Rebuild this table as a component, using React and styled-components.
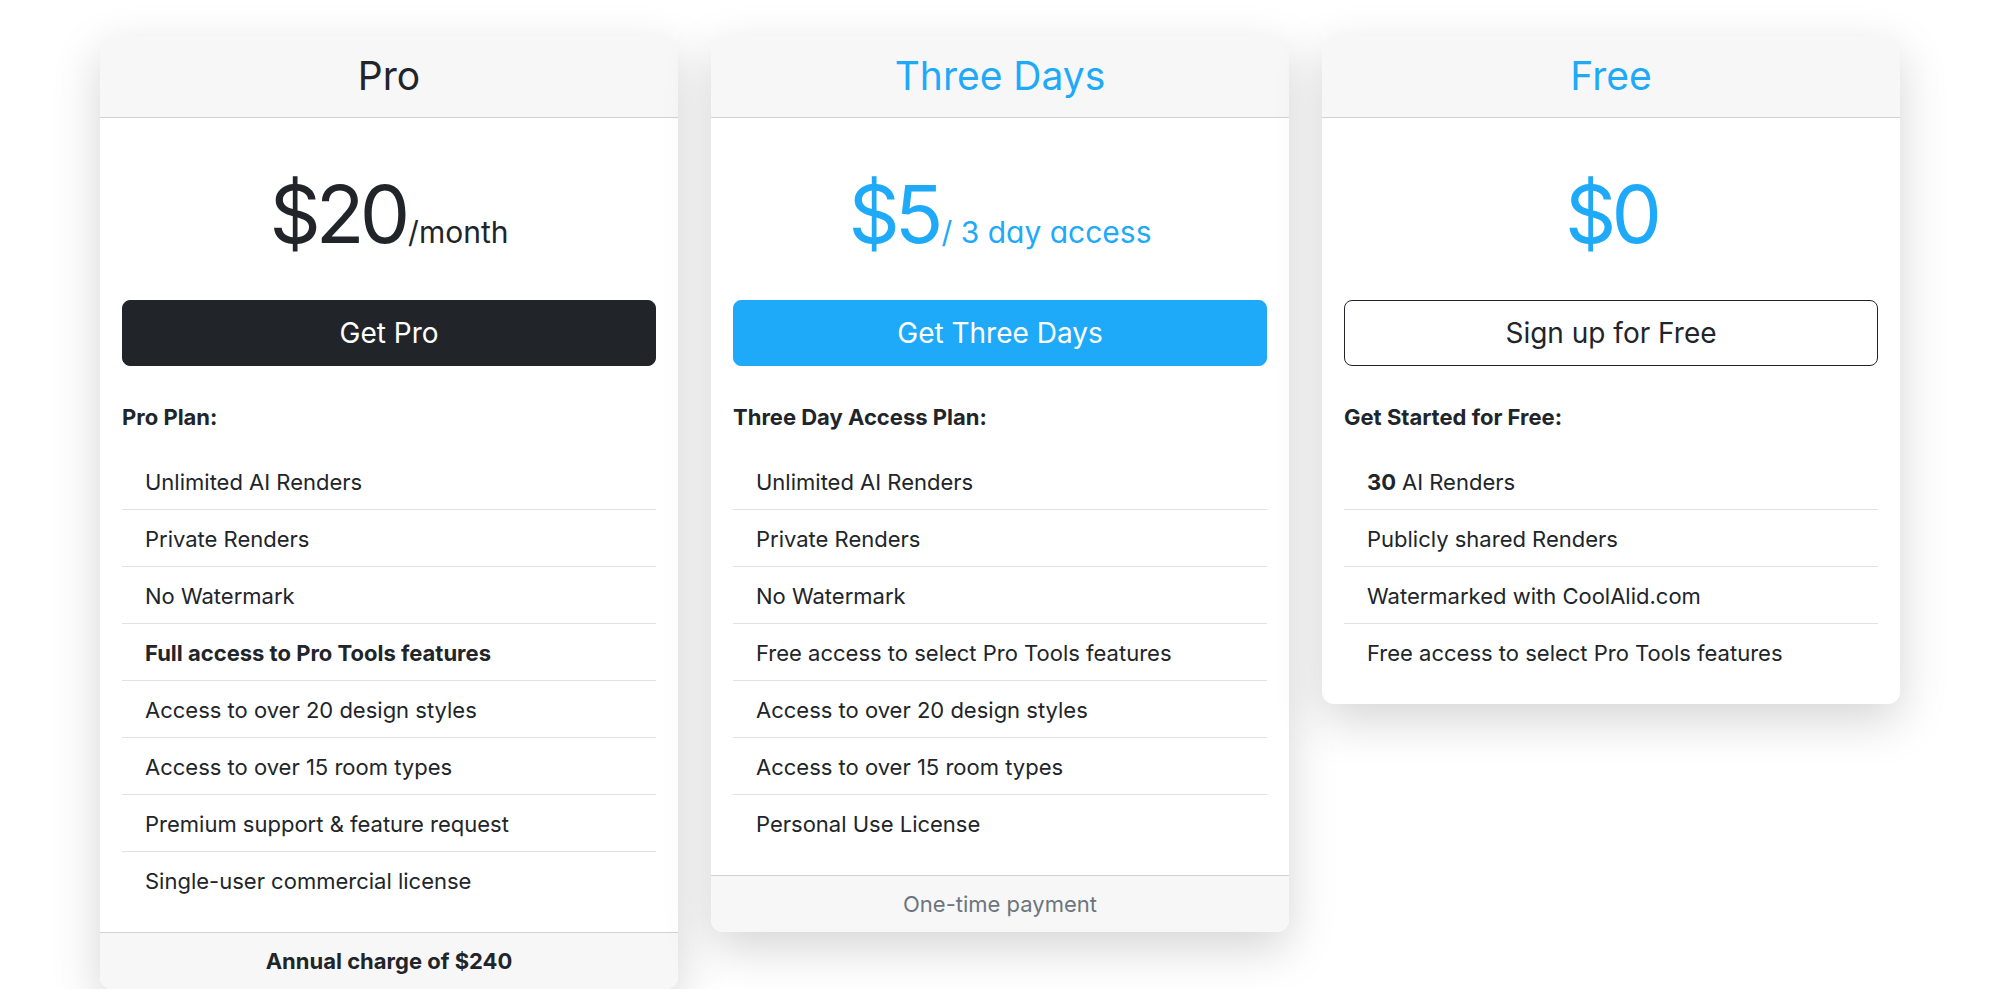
import React from "react";
import styled, { createGlobalStyle, css } from "styled-components";

const BLUE = "#1eaaf9";
const DARK = "#212529";

const GlobalStyle = createGlobalStyle`
  html, body { margin: 0; padding: 0; background: #ffffff; }
  body {
    font-family: Inter, "Noto Sans", "Liberation Sans", sans-serif;
    color: ${DARK};
    -webkit-font-smoothing: antialiased;
  }
  * { box-sizing: border-box; }
`;

const Page = styled.main`
  width: 1800px;
  margin: 0 auto;
  padding-top: 36px;
  display: grid;
  grid-template-columns: repeat(3, 1fr);
  column-gap: 33px;
  align-items: start;
`;

const Card = styled.section`
  background: #ffffff;
  border-radius: 12px;
  box-shadow: 0 16px 48px rgba(0, 0, 0, 0.17);
  overflow: hidden;
  display: flex;
  flex-direction: column;
`;

const CardHeader = styled.header`
  height: 81px;
  background: #f7f7f7;
  border-bottom: 1px solid #d2d2d2;
  display: flex;
  align-items: center;
  justify-content: center;
  box-sizing: content-box;
`;

const Title = styled.h3`
  margin: 0;
  font-size: 39px;
  font-weight: 400;
  line-height: 1.2;
  color: ${(p) => (p.$accent ? BLUE : DARK)};
`;

const CardBody = styled.div`
  padding: 22px 22px 24px;
`;

const PriceRow = styled.div`
  margin: 34px 0 46px;
  text-align: center;
  line-height: 1;
  font-size: 80px;
  font-family: Inter, "Noto Sans", sans-serif;
  font-feature-settings: "cv11" 1;
  color: ${(p) => (p.$accent ? BLUE : DARK)};
  white-space: nowrap;
`;

const Amount = styled.span`
  font-size: 80px;
  font-weight: 400;
  letter-spacing: -5px;
`;

const Unit = styled.span`
  font-size: 30px;
  font-weight: 400;
  margin-left: 3px;
`;

const variants = {
  dark: css`
    background: ${DARK};
    border-color: ${DARK};
    color: #ffffff;
  `,
  primary: css`
    background: ${BLUE};
    border-color: ${BLUE};
    color: #ffffff;
  `,
  outline: css`
    background: #ffffff;
    border-color: ${DARK};
    color: ${DARK};
  `,
};

const PlanButton = styled.button`
  display: block;
  width: 100%;
  height: 66px;
  border: 1px solid transparent;
  border-radius: 8px;
  font-family: Inter, "Noto Sans", sans-serif;
  font-size: 28px;
  font-weight: 400;
  cursor: pointer;
  ${(p) => variants[p.$variant]}
`;

const PlanLabel = styled.div`
  margin-top: 36px;
  font-size: 22px;
  font-weight: 700;
  line-height: 30px;
`;

const FeatureList = styled.ul`
  list-style: none;
  margin: 21px 0 0;
  padding: 0;
`;

const Feature = styled.li`
  height: 57px;
  padding: 3px 23px 0;
  display: flex;
  align-items: center;
  font-size: 22px;
  line-height: 1.5;
  border-bottom: 1px solid #e2e2e2;
  font-weight: ${(p) => (p.$bold ? 700 : 400)};
  &:last-child {
    border-bottom: none;
    height: 56px;
  }
  b { font-weight: 700; margin-right: 0.27em; }
`;

const CardFooter = styled.footer`
  height: 56px;
  background: #f7f7f7;
  border-top: 1px solid #d2d2d2;
  display: flex;
  align-items: center;
  justify-content: center;
  font-size: 22px;
  font-weight: ${(p) => (p.$muted ? 400 : 700)};
  color: ${(p) => (p.$muted ? "#6c757d" : DARK)};
  box-sizing: content-box;
`;

const plans = [
  {
    title: "Pro",
    accent: false,
    amount: "$20",
    unit: "/month",
    button: "Get Pro",
    variant: "dark",
    label: "Pro Plan:",
    features: [
      { text: "Unlimited AI Renders" },
      { text: "Private Renders" },
      { text: "No Watermark" },
      { text: "Full access to Pro Tools features", bold: true },
      { text: "Access to over 20 design styles" },
      { text: "Access to over 15 room types" },
      { text: "Premium support & feature request" },
      { text: "Single-user commercial license" },
    ],
    footer: { text: "Annual charge of $240", muted: false },
  },
  {
    title: "Three Days",
    accent: true,
    amount: "$5",
    unit: "/ 3 day access",
    button: "Get Three Days",
    variant: "primary",
    label: "Three Day Access Plan:",
    features: [
      { text: "Unlimited AI Renders" },
      { text: "Private Renders" },
      { text: "No Watermark" },
      { text: "Free access to select Pro Tools features" },
      { text: "Access to over 20 design styles" },
      { text: "Access to over 15 room types" },
      { text: "Personal Use License" },
    ],
    footer: { text: "One-time payment", muted: true },
  },
  {
    title: "Free",
    accent: true,
    amount: "$0",
    unit: null,
    button: "Sign up for Free",
    variant: "outline",
    label: "Get Started for Free:",
    features: [
      { lead: "30", text: "AI Renders" },
      { text: "Publicly shared Renders" },
      { text: "Watermarked with CoolAlid.com" },
      { text: "Free access to select Pro Tools features" },
    ],
    footer: null,
  },
];

export default function App() {
  return (
    <>
      <GlobalStyle />
      <Page>
        {plans.map((plan) => (
          <Card key={plan.title}>
            <CardHeader>
              <Title $accent={plan.accent}>{plan.title}</Title>
            </CardHeader>
            <CardBody>
              <PriceRow $accent={plan.accent}>
                <Amount>{plan.amount}</Amount>
                {plan.unit && <Unit>{plan.unit}</Unit>}
              </PriceRow>
              <PlanButton $variant={plan.variant}>{plan.button}</PlanButton>
              <PlanLabel>{plan.label}</PlanLabel>
              <FeatureList>
                {plan.features.map((f) => (
                  <Feature key={f.text} $bold={f.bold}>
                    {f.lead && <b>{f.lead}</b>}
                    {f.text}
                  </Feature>
                ))}
              </FeatureList>
            </CardBody>
            {plan.footer && (
              <CardFooter $muted={plan.footer.muted}>{plan.footer.text}</CardFooter>
            )}
          </Card>
        ))}
      </Page>
    </>
  );
}
